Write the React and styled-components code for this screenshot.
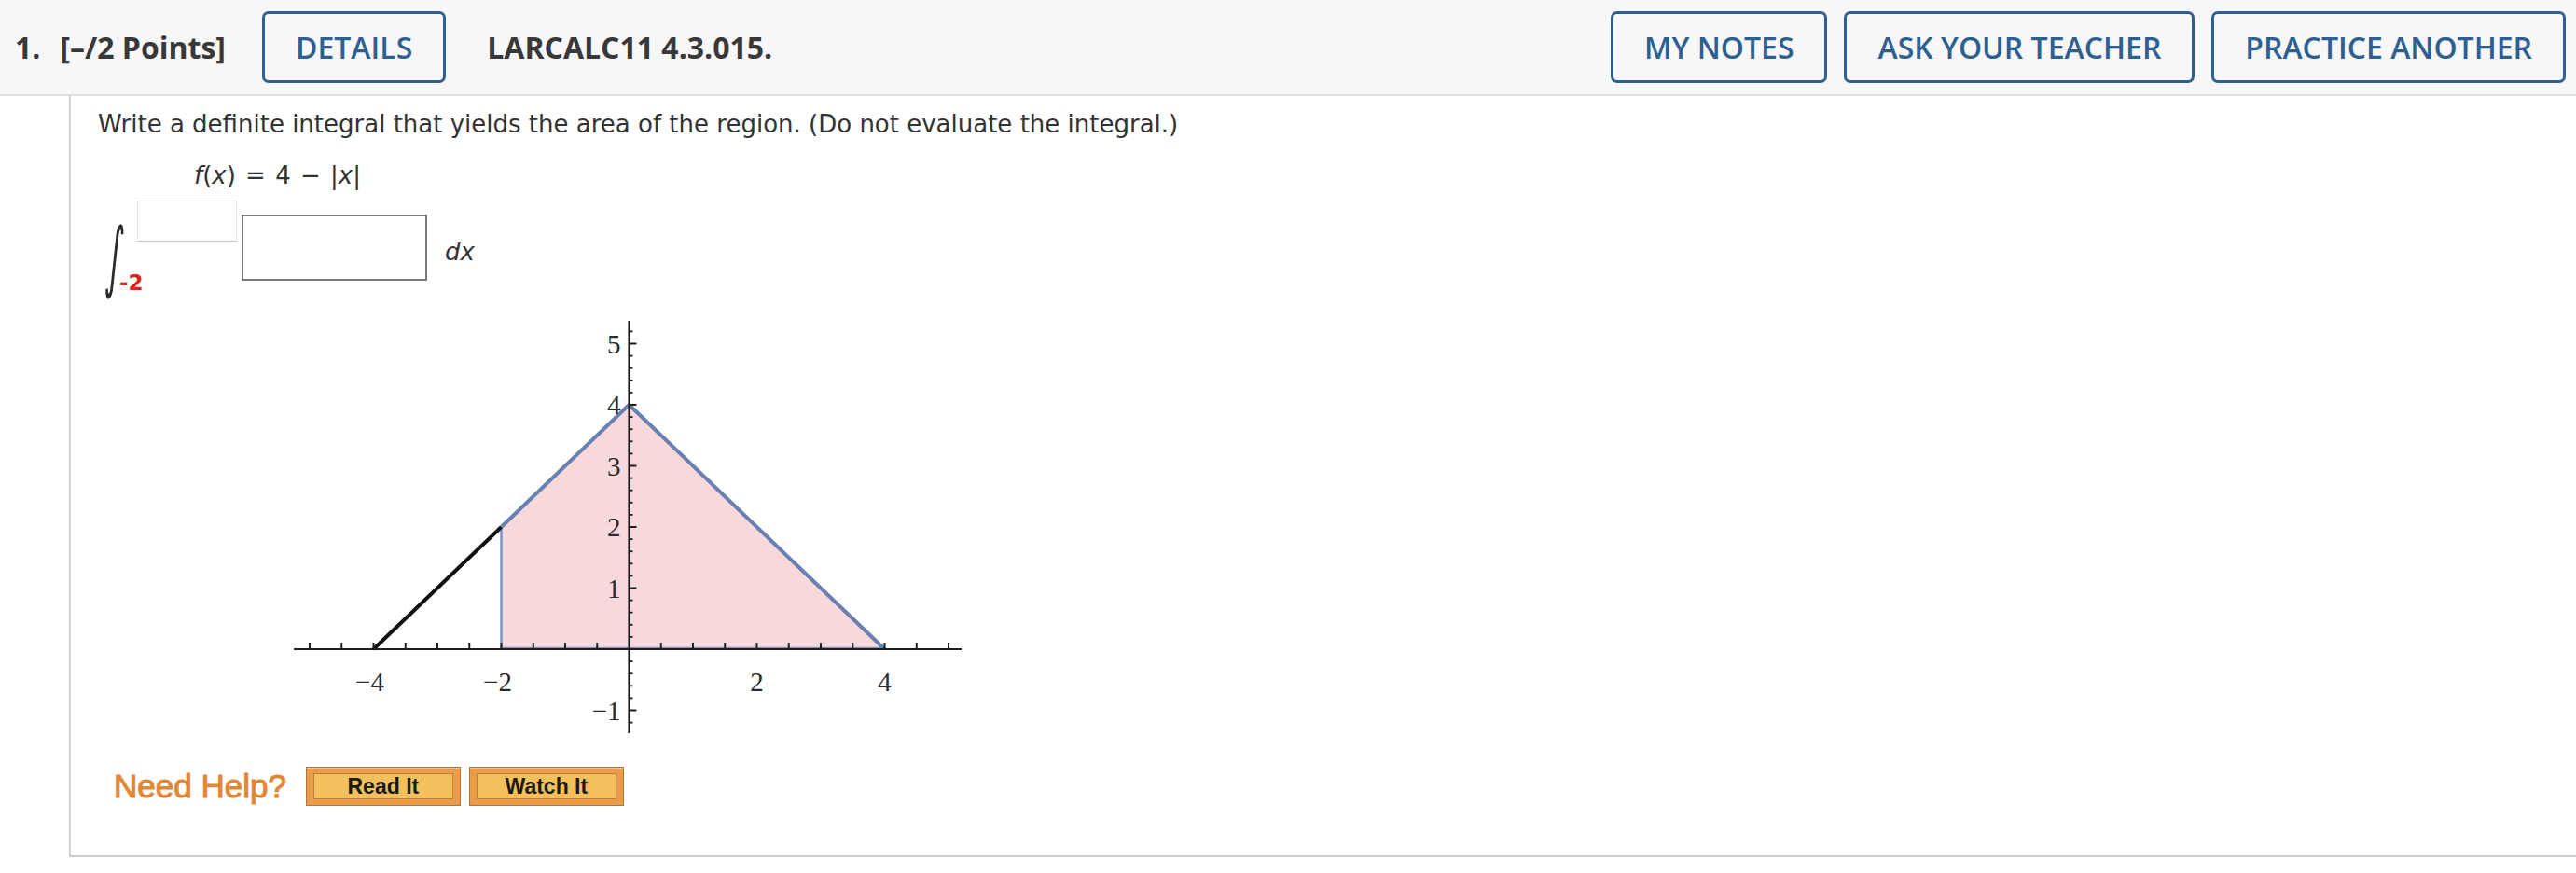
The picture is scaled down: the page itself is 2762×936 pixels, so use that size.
import React from 'react';
import styled, { createGlobalStyle } from 'styled-components';

const GlobalStyle = createGlobalStyle`
  body {
    margin: 0;
    background: #ffffff;
    font-family: 'Open Sans', sans-serif;
  }
`

const ox = 384.5;
const oy = 365;
const ux = 68.5;
const uy = 65.5;
const X = v => ox + v * ux;
const Y = v => oy - v * uy;

const xTicks = [];
for (let k = -10; k <= 10; k++) if (k !== 0) xTicks.push(k / 2);
const yMinor = [];
for (let k = -6; k <= 26; k++) if (k % 5 !== 0) yMinor.push(k / 5);

const Graph = () => (
  <Plot width="760" height="470" viewBox="0 0 760 470">
    <polygon
      points={`${X(-2)},${Y(0)} ${X(-2)},${Y(2)} ${X(0)},${Y(4)} ${X(4)},${Y(0)}`}
      fill="#f8d9db"
    />
    <line x1={X(-2)} y1={Y(0)} x2={X(-2)} y2={Y(2)} stroke="#7d92c6" strokeWidth="2.5" />
    <line x1={X(-2)} y1={Y(0) - 1} x2={X(4)} y2={Y(0) - 1} stroke="#7d92c6" strokeWidth="2.5" />
    <line x1={X(-4)} y1={Y(0)} x2={X(-2)} y2={Y(2)} stroke="#111" strokeWidth="4" />
    <polyline
      points={`${X(-2)},${Y(2)} ${X(0)},${Y(4)} ${X(4)},${Y(0)}`}
      fill="none" stroke="#6a80b0" strokeWidth="4" strokeLinejoin="round"
    />

    <line x1="25" y1={oy} x2="741" y2={oy} stroke="#1e1e1e" strokeWidth="2.2" />
    {xTicks.map(t => (
      <line key={t} x1={X(t)} y1={oy - 7} x2={X(t)} y2={oy + 1} stroke="#1e1e1e" strokeWidth="2" />
    ))}
    <line x1={ox} y1="13" x2={ox} y2="455" stroke="#1e1e1e" strokeWidth="2.2" />
    {yMinor.map(t => (
      <line key={t} x1={ox} y1={Y(t)} x2={ox + 4} y2={Y(t)} stroke="#1e1e1e" strokeWidth="1.8" />
    ))}
    {[-1, 1, 2, 3, 4, 5].map(t => (
      <line key={t} x1={ox} y1={Y(t)} x2={ox + 8} y2={Y(t)} stroke="#1e1e1e" strokeWidth="2" />
    ))}

    <g fontFamily="'Liberation Serif', serif" fontSize="29" fill="#2b2b2b">
      {[-4, -2, 2, 4].map(t => (
        <text key={t} x={X(t) - (t < 0 ? 4 : 0)} y={oy + 45} textAnchor="middle">
          {t < 0 ? `\u2212${-t}` : t}
        </text>
      ))}
      {[-1, 1, 2, 3, 4, 5].map(t => (
        <text key={t} x={ox - 9} y={Y(t) + 10} textAnchor="end">
          {t < 0 ? `\u2212${-t}` : t}
        </text>
      ))}
    </g>
  </Plot>
)

const App = () => {
  return (
    <Page>
      <GlobalStyle />
      <Header>
        <QNumber>1.</QNumber>
        <Points>[–/2 Points]</Points>
        <OutlineButton $lead>DETAILS</OutlineButton>
        <Title>LARCALC11 4.3.015.</Title>
        <HeaderActions>
          <OutlineButton>MY NOTES</OutlineButton>
          <OutlineButton>ASK YOUR TEACHER</OutlineButton>
          <OutlineButton>PRACTICE ANOTHER</OutlineButton>
        </HeaderActions>
      </Header>

      <Content>
        <Prompt>Write a definite integral that yields the area of the region. (Do not evaluate the integral.)</Prompt>
        <Formula>
          <Var>f</Var>(<Var>x</Var>) = 4 − |<Var>x</Var>|
        </Formula>

        <IntegralRow>
          <SignCol>
            <Sign>∫</Sign>
            <LowerLimit>-2</LowerLimit>
          </SignCol>
          <UpperBox />
          <AnswerBox />
          <Dx>dx</Dx>
        </IntegralRow>

        <Graph />

        <HelpRow>
          <HelpLabel>Need Help?</HelpLabel>
          <HelpButton><HelpFace>Read It</HelpFace></HelpButton>
          <HelpButton><HelpFace>Watch It</HelpFace></HelpButton>
        </HelpRow>
      </Content>
    </Page>
  )
}

const Page = styled.div`
  width: 2762px;
  min-height: 936px;
  background: #ffffff;
`

const Header = styled.header`
  display: flex;
  align-items: center;
  height: 103px;
  padding: 0 11px 0 16px;
  box-sizing: border-box;
  background-color: #f7f7f7;
  border-bottom: 2px solid #dedede;
  font-family: 'Open Sans', sans-serif;
  color: #383838;
`

const QNumber = styled.span`
  font-size: 32px;
  font-weight: 700;
`

const Points = styled.span`
  margin-left: 21px;
  font-size: 32px;
  font-weight: 700;
`

const Title = styled.span`
  margin-left: 44px;
  font-size: 32px;
  font-weight: 700;
`

const OutlineButton = styled.button`
  height: 77px;
  margin-left: ${props => props.$lead ? '39px' : '0'};
  padding: 0 33px;
  border: 3px solid #2d5f91;
  border-radius: 7px;
  background: transparent;
  color: #2d5f91;
  font-family: 'Open Sans', sans-serif;
  font-size: 32px;
  font-weight: 600;
  white-space: nowrap;
`

const HeaderActions = styled.div`
  display: flex;
  gap: 18px;
  margin-left: auto;
`

const Content = styled.main`
  margin-left: 74px;
  padding: 15px 0 53px 29px;
  border-left: 2px solid #d3d3d3;
  border-bottom: 2px solid #cccccc;
  font-family: 'DejaVu Sans', Verdana, sans-serif;
  color: #333;
`

const Prompt = styled.p`
  margin: 0;
  font-size: 26px;
  line-height: 31px;
`

const Formula = styled.p`
  margin: 24px 0 0 103px;
  font-size: 26px;
  line-height: 31px;
  word-spacing: 2px;
`

const Var = styled.i`
  font-style: italic;
`

const IntegralRow = styled.div`
  display: flex;
  align-items: flex-start;
  margin: 11px 0 0 7px;
`

const SignCol = styled.div`
  position: relative;
  width: 35px;
  height: 98px;
`

const Sign = styled.span`
  position: absolute;
  left: 6px;
  top: 18px;
  font-family: 'DejaVu Sans', sans-serif;
  font-size: 62px;
  line-height: 1;
  color: #2a2a2a;
  transform: scale(0.55, 1.34) skewX(-12deg);
  transform-origin: top left;
`

const LowerLimit = styled.span`
  position: absolute;
  left: 16px;
  bottom: -3px;
  font-size: 23px;
  font-weight: 600;
  color: #d4241b;
`

const UpperBox = styled.div`
  width: 107px;
  height: 44px;
  box-sizing: border-box;
  border: 1px solid #e4e4e4;
  border-bottom-color: #c4c4c4;
  background: #fff;
`

const AnswerBox = styled.div`
  width: 199px;
  height: 71px;
  margin: 15px 0 0 5px;
  box-sizing: border-box;
  border: 2px solid #7a7a7a;
  background: #fff;
`

const Dx = styled.span`
  margin: 40px 0 0 19px;
  font-size: 26px;
  line-height: 31px;
  font-style: italic;
`

const Plot = styled.svg`
  display: block;
  margin: 18px 0 0 185px;
`

const HelpRow = styled.div`
  display: flex;
  align-items: center;
  margin: 21px 0 0 17px;
`

const HelpLabel = styled.span`
  margin-right: 21px;
  font-family: 'Liberation Sans', Arial, sans-serif;
  font-size: 35px;
  color: #e08838;
  -webkit-text-stroke: 1.1px #e08838;
`

const HelpButton = styled.div`
  width: 166px;
  height: 42px;
  margin-right: 9px;
  padding: 6px 7px;
  box-sizing: border-box;
  border: 1px solid #a67843;
  background: #ec9c48;
  box-shadow: inset 0 2px 0 #f6c58c;
`

const HelpFace = styled.div`
  display: flex;
  align-items: center;
  justify-content: center;
  height: 100%;
  box-sizing: border-box;
  border: 1px solid #b9803f;
  background: #f2c05c;
  font-family: 'Liberation Sans', Arial, sans-serif;
  font-size: 23px;
  font-weight: 700;
  color: #1d1a14;
`

export default App;
